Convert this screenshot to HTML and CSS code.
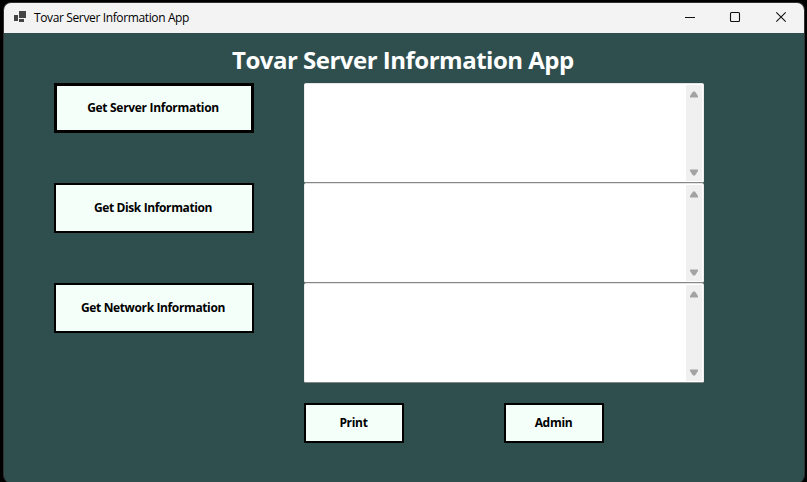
FILE: index.html
```html
<!DOCTYPE html>
<html lang="en">
<head>
<meta charset="utf-8">
<title>Tovar Server Information App</title>
<link rel="stylesheet" href="styles.css">
</head>
<body>
<div class="window">
  <header class="titlebar">
    <svg class="app-icon" width="12" height="11" viewBox="0 0 12 11" shape-rendering="crispEdges"><path d="M0 4h4v6H0zM5 0h7v7H5zM5 8h5v3H5z"/></svg>
    <span class="caption">Tovar Server Information App</span>
    <svg class="controls" width="104" height="12" viewBox="0 0 104 12"><path d="M0 6.5h10"/><rect x="45.5" y="1.5" width="9" height="9" rx="1"/><path d="M91.3 1.3l9.4 9.4M100.7 1.3l-9.4 9.4"/></svg>
  </header>
  <main class="client">
    <h1 class="heading">Tovar Server Information App</h1>
    <div class="columns">
      <div class="actions">
        <button class="button focused">Get Server Information</button>
        <button class="button disk">Get Disk Information</button>
        <button class="button network">Get Network Information</button>
      </div>
      <div class="outputs">
        <div class="output"><div class="scrollbar"><svg width="10" height="7"><path d="M4 .5h2L9 5v1.5H1V5z"/></svg><svg width="10" height="7"><path d="M1 .5h8V2L6 6.5H4L1 2z"/></svg></div></div>
        <div class="output"><div class="scrollbar"><svg width="10" height="7"><path d="M4 .5h2L9 5v1.5H1V5z"/></svg><svg width="10" height="7"><path d="M1 .5h8V2L6 6.5H4L1 2z"/></svg></div></div>
        <div class="output"><div class="scrollbar"><svg width="10" height="7"><path d="M4 .5h2L9 5v1.5H1V5z"/></svg><svg width="10" height="7"><path d="M1 .5h8V2L6 6.5H4L1 2z"/></svg></div></div>
      </div>
    </div>
    <div class="footer">
      <button class="button small">Print</button>
      <button class="button small">Admin</button>
    </div>
  </main>
</div>
</body>
</html>
```
FILE: styles.css
```css
* { box-sizing: border-box; }
body {
  margin: 0;
  padding: 2px 2px 0 3px;
  height: 482px;
  background: #000;
  font-family: "Open Sans", "Noto Sans", sans-serif;
  overflow: hidden;
}
.window {
  height: 481px;
  border: 1px solid #303030;
  border-bottom: 0;
  border-radius: 8px;
  overflow: hidden;
  background: #2f4f4f;
}
.titlebar {
  height: 30px;
  display: flex;
  align-items: center;
  padding: 0 15px 0 10px;
  background: #f3f3f3;
}
.app-icon { fill: #444; margin-right: 8px; margin-top: -3px; }
.caption { font-size: 12px; line-height: 16px; letter-spacing: -0.37px; white-space: nowrap; }
.controls { margin-left: auto; margin-top: -2px; fill: none; stroke: #111; stroke-width: 1.1; }
.client { height: 450px; }
.heading {
  margin: 0;
  height: 50px;
  padding: 11px 0 0 228px;
  color: #fff;
  font-size: 24px;
  line-height: 32px;
  font-weight: 700;
  letter-spacing: -0.5px;
  white-space: nowrap;
}
.columns { display: flex; gap: 50px; padding-left: 50px; }
.actions { width: 200px; display: flex; flex-direction: column; gap: 50px; }
.button {
  width: 200px;
  height: 50px;
  padding: 0 2px 0 0;
  display: flex;
  align-items: center;
  justify-content: center;
  border: 2px solid #000;
  background: #f5fffa;
  color: #000;
  font: 700 12px/16px "Open Sans", "Noto Sans", sans-serif;
  letter-spacing: -0.3px;
  white-space: nowrap;
}
.disk { letter-spacing: -0.38px; }
.network { letter-spacing: -0.37px; }
.focused { border-width: 3px; }
.small { width: 100px; height: 40px; }
.outputs { width: 400px; }
.output {
  height: 100px;
  padding: 1px 1px 1px 0;
  display: flex;
  justify-content: flex-end;
  background: #fff;
  border: 1px solid #ececec;
  border-top-color: #e4e4e4;
  border-bottom-color: #868686;
  border-radius: 2px;
}
.scrollbar {
  width: 16px;
  display: flex;
  flex-direction: column;
  justify-content: space-between;
  align-items: center;
  padding: 6px 0 5px;
  background: #f0f0f0;
  fill: #a3a3a3;
}
.footer { display: flex; gap: 100px; padding: 20px 0 0 300px; }
.footer .button { padding: 0 1px 0 0; }
```
